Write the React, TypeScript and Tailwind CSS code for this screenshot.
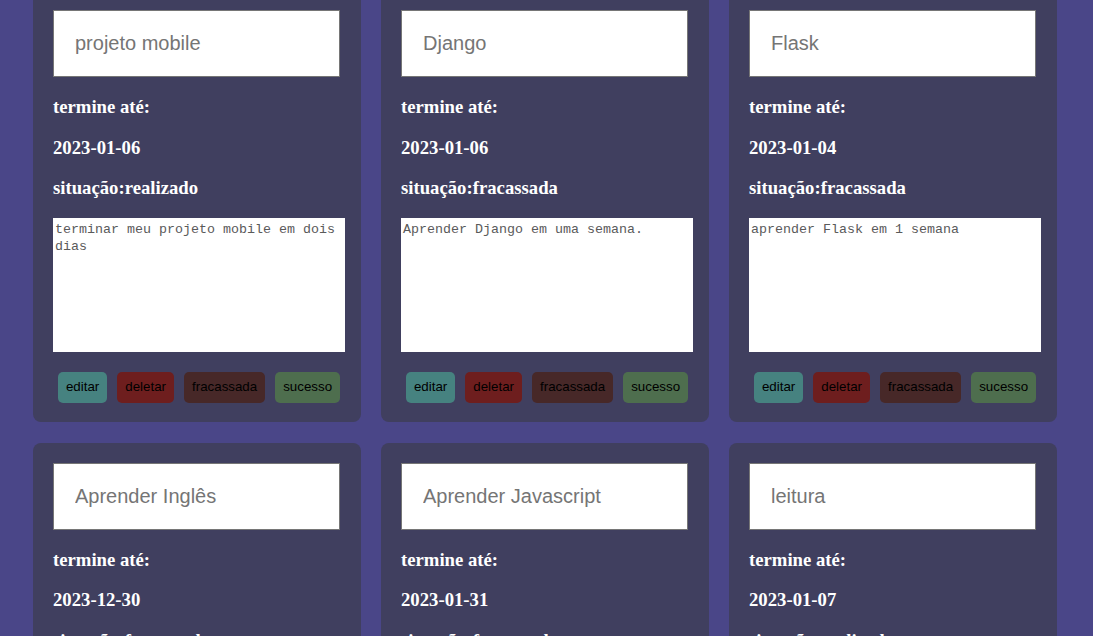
const tarefas = [
  { titulo: 'projeto mobile', data: '2023-01-06', situacao: 'realizado', descricao: 'terminar meu projeto mobile em dois dias' },
  { titulo: 'Django', data: '2023-01-06', situacao: 'fracassada', descricao: 'Aprender Django em uma semana.' },
  { titulo: 'Flask', data: '2023-01-04', situacao: 'fracassada', descricao: 'aprender Flask em 1 semana' },
  { titulo: 'Aprender Inglês', data: '2023-12-30', situacao: 'fracassada', descricao: '' },
  { titulo: 'Aprender Javascript', data: '2023-01-31', situacao: 'fracassada', descricao: '' },
  { titulo: 'leitura', data: '2023-01-07', situacao: 'realizado', descricao: '' },
]

const botoes = [
  { label: 'editar', cor: 'bg-[#468280]' },
  { label: 'deletar', cor: 'bg-[#6e1e1e]' },
  { label: 'fracassada', cor: 'bg-[#472828]' },
  { label: 'sucesso', cor: 'bg-[#4e6e4e]' },
]

function Card({ t }: { t: (typeof tarefas)[number] }) {
  return (
    <div className="w-[328px] rounded-lg bg-[#403f5f] px-5 pt-5 pb-[19px]">
      <input
        readOnly
        value={t.titulo}
        className="block w-[287px] h-[67px] border border-[#767676] bg-white pl-[21px] text-[20px] text-[#757575] font-['Liberation_Sans',Arial,sans-serif] outline-none"
      />
      <h3 className="mt-[19px] text-[18.72px] leading-[21.5px] font-bold text-white font-['Liberation_Serif',serif]">termine até:</h3>
      <h3 className="mt-[19px] text-[18.72px] leading-[21.5px] font-bold text-white font-['Liberation_Serif',serif]">{t.data}</h3>
      <h3 className="mt-[19px] mb-[19px] text-[18.72px] leading-[21.5px] font-bold text-white font-['Liberation_Serif',serif]">
        situação:{t.situacao}
      </h3>
      <textarea
        readOnly
        value={t.descricao}
        className="block w-[292px] h-[134px] resize-none bg-white px-[2px] py-[3px] text-[13.33px] leading-[17px] text-[#5a5a5a] font-['Liberation_Mono',monospace] outline-none"
      />
      <div className="mt-5 w-[292px] flex justify-center gap-[10px]">
        {botoes.map((b) => (
          <button
            key={b.label}
            className={`${b.cor} h-[31px] px-2 rounded-[5px] text-[13.33px] text-black font-['Liberation_Sans',Arial,sans-serif]`}
          >
            {b.label}
          </button>
        ))}
      </div>
    </div>
  )
}

export default function App() {
  return (
    <div className="h-[636px] overflow-hidden bg-[#4a4688]">
      <div className="-mt-[10px] ml-[33px] grid grid-cols-[repeat(3,328px)] gap-x-5 gap-y-[21px]">
        {tarefas.map((t) => (
          <Card key={t.titulo} t={t} />
        ))}
      </div>
    </div>
  )
}
